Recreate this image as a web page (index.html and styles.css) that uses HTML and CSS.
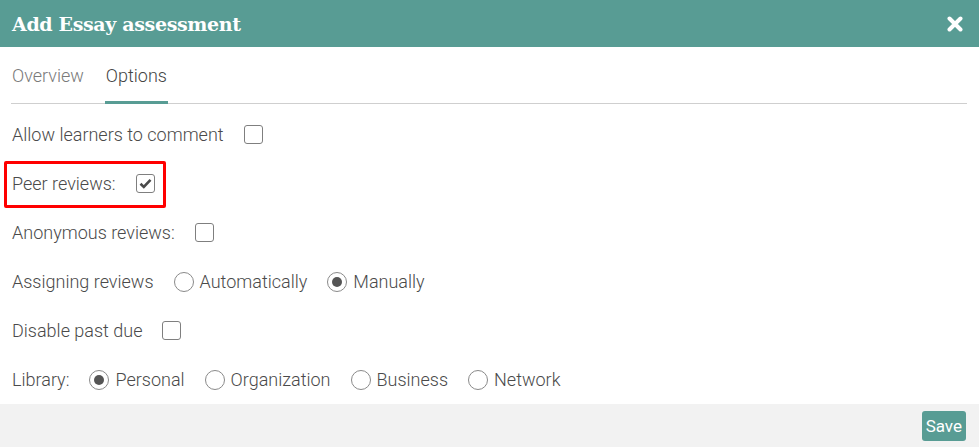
FILE: index.html
```html
<!DOCTYPE html>
<html>
<head>
<meta charset="utf-8">
<link rel="stylesheet" href="styles.css">
</head>
<body>
<div class="dialog">
  <div class="header">
    <h1 class="title">Add Essay assessment</h1>
    <button class="close" aria-label="Close">
      <svg width="16" height="16" viewBox="0 0 16 16"><path d="M2.5 2.5 L13.5 13.5 M13.5 2.5 L2.5 13.5" stroke="#fff" stroke-width="4" stroke-linecap="round"/></svg>
    </button>
  </div>
  <div class="tabs">
    <span class="tab">Overview</span>
    <span class="tab active">Options</span>
  </div>
  <div class="content">
    <div class="row">
      <span class="label">Allow learners to comment</span>
      <span class="checkbox"></span>
    </div>
    <div class="row highlighted">
      <span class="label">Peer reviews:</span>
      <span class="checkbox checked">
        <svg width="13" height="11" viewBox="0 0 13 11"><path d="M1.5 5.8 L4.8 9 L11.5 1.8" fill="none" stroke="#4a4a4a" stroke-width="2.6"/></svg>
      </span>
    </div>
    <div class="row">
      <span class="label">Anonymous reviews:</span>
      <span class="checkbox"></span>
    </div>
    <div class="row">
      <span class="label">Assigning reviews</span>
      <span class="option"><span class="radio"></span>Automatically</span>
      <span class="option"><span class="radio on"></span>Manually</span>
    </div>
    <div class="row">
      <span class="label">Disable past due</span>
      <span class="checkbox"></span>
    </div>
    <div class="row">
      <span class="label">Library:</span>
      <span class="option"><span class="radio on"></span>Personal</span>
      <span class="option"><span class="radio"></span>Organization</span>
      <span class="option"><span class="radio"></span>Business</span>
      <span class="option"><span class="radio"></span>Network</span>
    </div>
  </div>
  <div class="footer">
    <button class="save">Save</button>
  </div>
</div>
</body>
</html>
```
FILE: styles.css
```css
html, body {
  margin: 0;
  padding: 0;
  background: #fff;
}
body {
  font-family: Roboto, "Noto Sans", sans-serif;
  font-weight: 300;
  color: #4a4a4a;
  font-size: 18px;
}
.dialog {
  width: 979px;
  height: 447px;
  display: flex;
  flex-direction: column;
}
.header {
  height: 47px;
  background: #589c94;
  display: flex;
  align-items: center;
  justify-content: space-between;
  padding: 0 16px 0 12px;
  box-sizing: border-box;
}
.title {
  margin: 0;
  font-family: "DejaVu Serif", "Liberation Serif", serif;
  font-weight: bold;
  font-size: 19px;
  color: #fff;
  letter-spacing: -0.35px;
}
.close {
  border: 0;
  background: none;
  padding: 0;
  display: flex;
  margin-top: 1px;
}
.tabs {
  margin: 0 12px 0 11px;
  height: 57px;
  border-bottom: 1px solid #cfcfcf;
  display: flex;
  align-items: stretch;
  gap: 20px;
  box-sizing: border-box;
}
.tab {
  display: flex;
  align-items: center;
  padding: 2px 1px 0;
  color: #7a7a7a;
  border-bottom: 3px solid transparent;
  margin-bottom: -1px;
}
.tab.active {
  color: #444;
  border-bottom-color: #589c94;
}
.content {
  flex: 1;
  padding: 6px 12px 0;
}
.row {
  height: 49px;
  display: flex;
  align-items: center;
  position: relative;
}
.label {
  margin-right: 20px;
}
.highlighted::after {
  content: "";
  position: absolute;
  left: -8px;
  top: 2px;
  width: 156px;
  height: 41px;
  border: 3px solid #f00;
  border-radius: 2px;
}
.checkbox {
  width: 19px;
  height: 19px;
  border: 1px solid #7f7f7f;
  border-radius: 3px;
  box-sizing: border-box;
  display: flex;
  align-items: center;
  justify-content: center;
  background: #fff;
}
.option {
  display: flex;
  align-items: center;
  margin-right: 20px;
}
.radio {
  width: 20px;
  height: 20px;
  border: 1px solid #8a8a8a;
  border-radius: 50%;
  box-sizing: border-box;
  margin-right: 6px;
  display: flex;
  align-items: center;
  justify-content: center;
}
.radio.on::before {
  content: "";
  width: 10px;
  height: 10px;
  border-radius: 50%;
  background: #555;
}
.footer {
  height: 43px;
  background: #f2f2f2;
  display: flex;
  align-items: center;
  justify-content: flex-end;
  padding-right: 13px;
}
.save {
  background: #589c94;
  color: #fff;
  border: 0;
  border-radius: 3px;
  font-family: Roboto, "Noto Sans", sans-serif;
  font-size: 17px;
  font-weight: 400;
  height: 30px;
  padding: 0 4px;
  margin-top: 1px;
}
```
